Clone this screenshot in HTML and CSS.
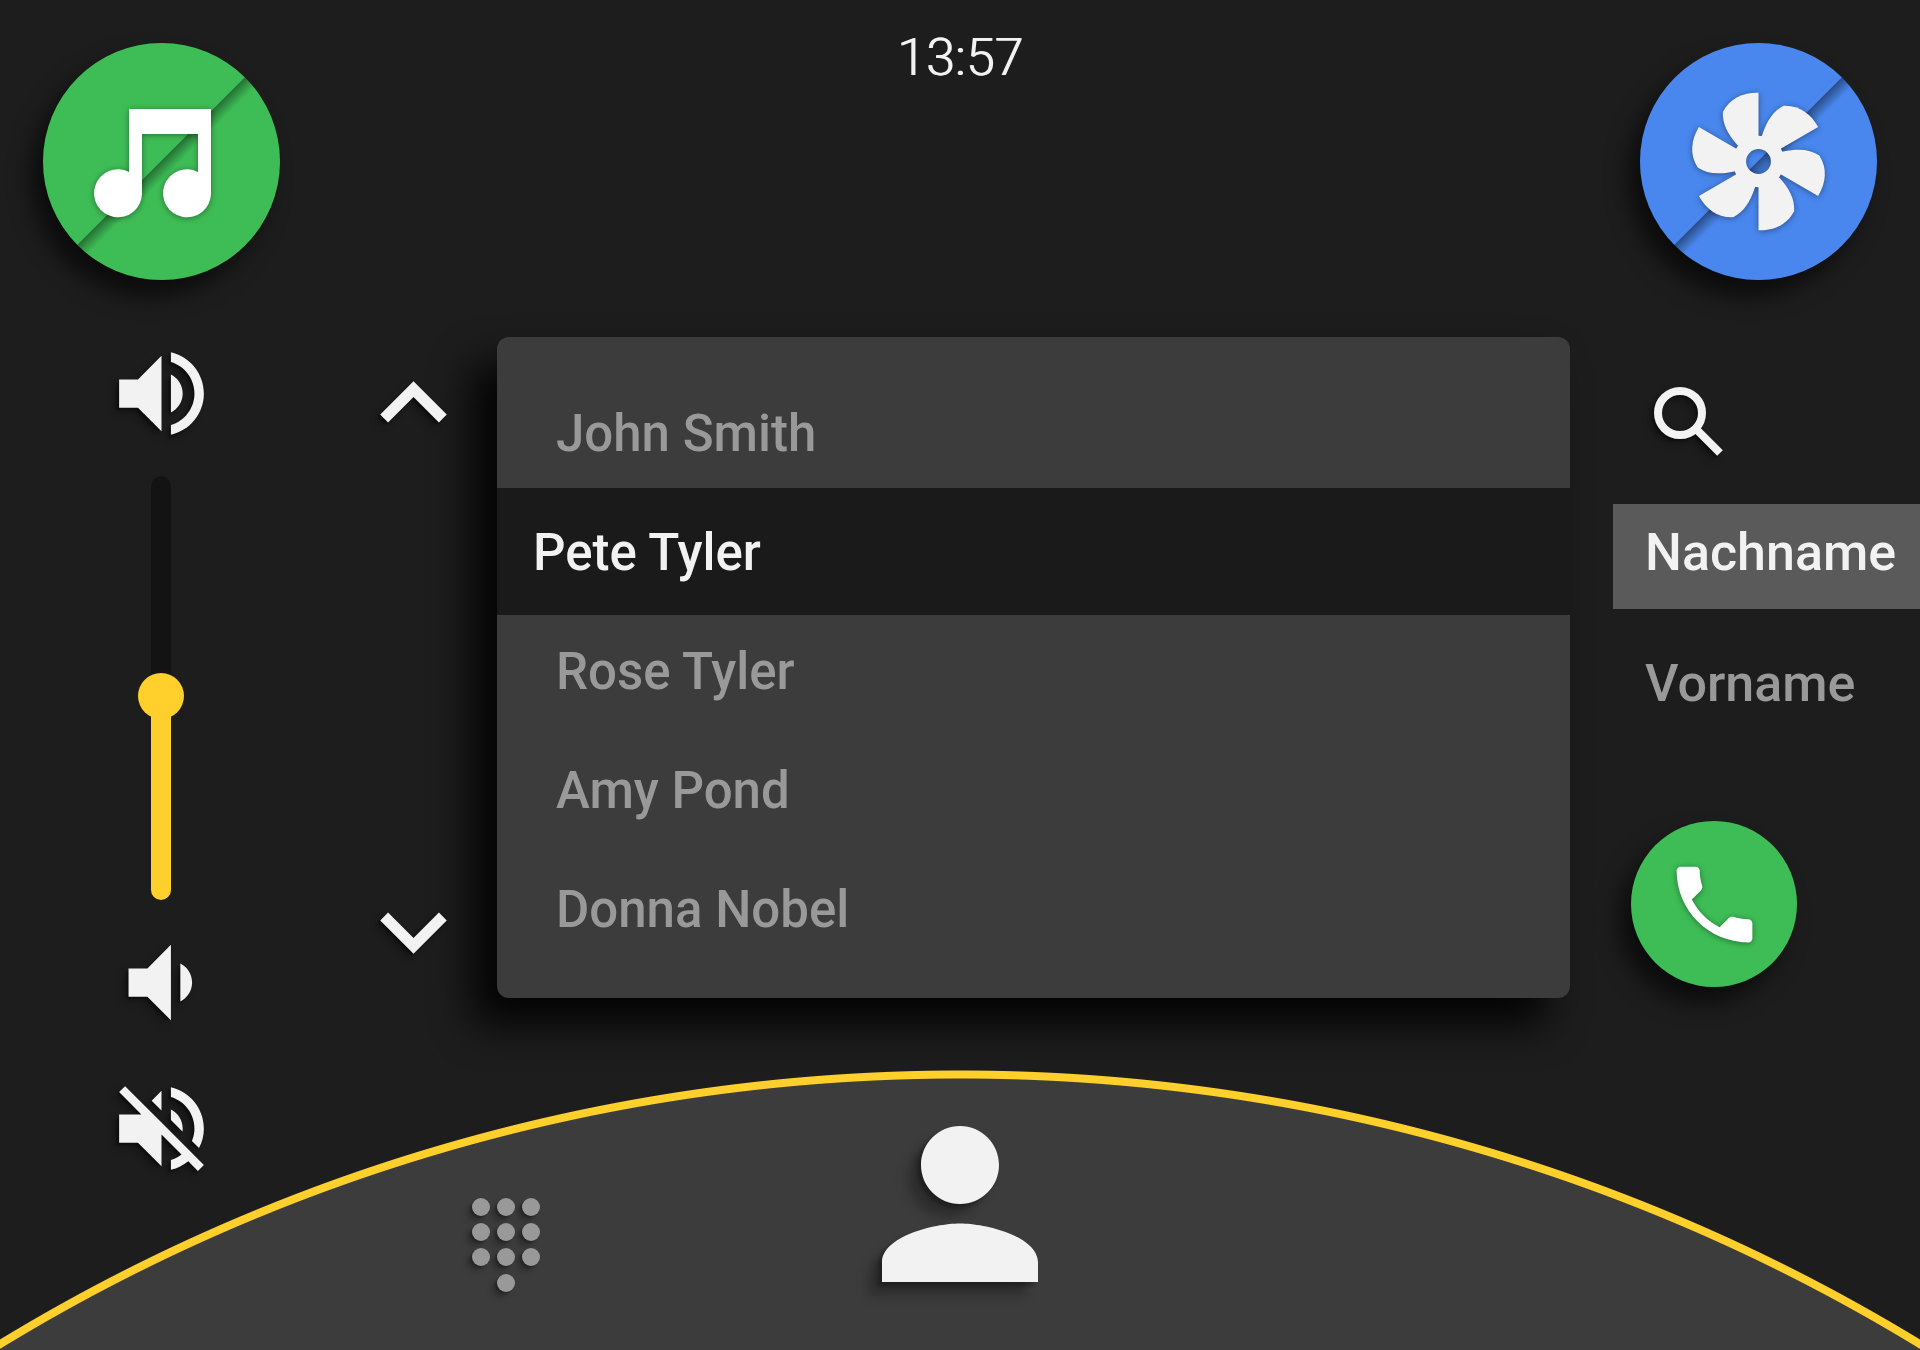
FILE: index.html
```html
<!DOCTYPE html>
<html lang="de">

<head>
  <meta charset="UTF-8">
  <meta name="viewport" content="width=device-width, initial-scale=1.0">
  <title>Telefon</title>
  <link rel="stylesheet" href="styles.css">
</head>

<body>
  <div class="screen">
    <header class="topbar">
      <button class="round music" aria-label="Musik">
        <svg viewBox="0 0 118 109" width="118" height="109">
          <path d="M36 0H118V85A24 24 0 1 1 105 63V25H49V85A24 24 0 1 1 36 63Z" />
        </svg>
      </button>
      <time class="clock">13:57</time>
      <button class="round climate" aria-label="Klima">
        <svg viewBox="-210 -210 420 420" width="141" height="141">
          <defs>
            <path id="blade" d="M0-60V-205C-45-206-85-189-106-148C-108-115-95-85-62-48L-30-40Z" />
          </defs>
          <circle class="hub" r="57" />
          <use href="#blade" />
          <use href="#blade" transform="rotate(60)" />
          <use href="#blade" transform="rotate(120)" />
          <use href="#blade" transform="rotate(180)" />
          <use href="#blade" transform="rotate(240)" />
          <use href="#blade" transform="rotate(300)" />
        </svg>
      </button>
    </header>

    <main class="content">
      <section class="volume">
        <button class="icon" aria-label="Lauter">
          <svg viewBox="0 0 24 24" width="113" height="113">
            <path d="M3 9v6h4l5 5V4L7 9H3zm13.500 3c0-1.770-1.020-3.290-2.500-4.030v8.050c1.480-.73 2.500-2.250 2.500-4.020zM14 3.230v2.060c2.890.86 5 3.540 5 6.710s-2.110 5.850-5 6.710v2.060c4.010-.91 7-4.490 7-8.770s-2.990-7.860-7-8.770z" />
          </svg>
        </button>
        <input class="slider" type="range" min="0" max="100" value="48" aria-label="Lautstärke">
        <button class="icon" aria-label="Leiser">
          <svg viewBox="0 0 24 24" width="113" height="113">
            <path d="M18.500 12c0-1.770-1.020-3.290-2.500-4.030v8.050c1.480-.73 2.500-2.250 2.500-4.020zM5 9v6h4l5 5V4L9 9H5z" />
          </svg>
        </button>
        <button class="icon mute" aria-label="Stumm">
          <svg viewBox="0 0 24 24" width="113" height="113">
            <path d="M16.500 12c0-1.770-1.020-3.290-2.500-4.030v2.210l2.450 2.450c.03-.2.05-.41.05-.63zm2.500 0c0 .94-.2 1.820-.54 2.640l1.510 1.510C20.630 14.910 21 13.500 21 12c0-4.280-2.990-7.860-7-8.770v2.060c2.890.86 5 3.540 5 6.710zM4.270 3L3 4.270 7.730 9H3v6h4l5 5v-6.730l4.250 4.250c-.67.52-1.420.93-2.250 1.180v2.060c1.380-.31 2.630-.95 3.690-1.810L19.730 21 21 19.730l-9-9L4.270 3zM12 4L9.910 6.090 12 8.180V4z" />
          </svg>
        </button>
      </section>

      <nav class="scroll">
        <button class="icon" aria-label="Nach oben">
          <svg viewBox="0 0 24 24" width="133" height="133">
            <path d="M7.410 15.410L12 10.830l4.590 4.580L18 14l-6-6-6 6z" />
          </svg>
        </button>
        <button class="icon" aria-label="Nach unten">
          <svg viewBox="0 0 24 24" width="133" height="133">
            <path d="M7.410 8.590L12 13.170l4.590-4.580L18 10l-6 6-6-6z" />
          </svg>
        </button>
      </nav>

      <ul class="contacts">
        <li><button class="contact">John Smith</button></li>
        <li><button class="contact selected">Pete Tyler</button></li>
        <li><button class="contact">Rose Tyler</button></li>
        <li><button class="contact">Amy Pond</button></li>
        <li><button class="contact">Donna Nobel</button></li>
      </ul>

      <aside class="filter">
        <button class="icon search" aria-label="Suchen">
          <svg viewBox="0 0 69 69" width="69" height="69">
            <circle cx="26" cy="26" r="22" />
            <path d="M41 41L66 66" />
          </svg>
        </button>
        <button class="sort selected">Nachname</button>
        <button class="sort">Vorname</button>
        <button class="round call" aria-label="Anrufen">
          <svg viewBox="0 0 24 24" width="101" height="101">
            <path d="M6.620 10.790c1.440 2.830 3.760 5.140 6.590 6.590l2.200-2.200c.27-.27.67-.36 1.020-.24 1.120.37 2.330.57 3.570.57.55 0 1 .45 1 1V20c0 .55-.45 1-1 1-9.390 0-17-7.610-17-17 0-.55.45-1 1-1h3.500c.55 0 1 .45 1 1 0 1.250.2 2.450.57 3.570.11.35.03.74-.25 1.020l-2.200 2.200z" />
          </svg>
        </button>
      </aside>

      <nav class="dock">
        <button class="icon dialpad" aria-label="Wähltastatur">
          <svg viewBox="0 0 68 94" width="68" height="94">
            <circle cx="9" cy="9" r="9" />
            <circle cx="34" cy="9" r="9" />
            <circle cx="59" cy="9" r="9" />
            <circle cx="9" cy="34" r="9" />
            <circle cx="34" cy="34" r="9" />
            <circle cx="59" cy="34" r="9" />
            <circle cx="9" cy="59" r="9" />
            <circle cx="34" cy="59" r="9" />
            <circle cx="59" cy="59" r="9" />
            <circle cx="34" cy="85" r="9" />
          </svg>
        </button>
        <button class="icon person" aria-label="Kontakte">
          <svg viewBox="0 0 24 24" width="234" height="234">
            <path d="M12 12c2.210 0 4-1.790 4-4s-1.790-4-4-4-4 1.790-4 4 1.790 4 4 4zm0 2c-2.670 0-8 1.340-8 4v2h16v-2c0-2.660-5.330-4-8-4z" />
          </svg>
        </button>
      </nav>
    </main>
  </div>
</body>

</html>
```

FILE: styles.css
```css
* {
  box-sizing: border-box;
}

body {
  margin: 0;
  background-color: #1d1d1d;
  color: #f2f2f2;
  font-family: Roboto, sans-serif;
}

button {
  padding: 0;
  border: none;
  background: none;
  color: inherit;
  font: inherit;
  cursor: pointer;
}

svg {
  display: block;
  overflow: visible;
  fill: #f2f2f2;
}

/* the dock is the top of a very large circle below the screen */
.screen {
  display: flex;
  flex-direction: column;
  min-height: 100vh;
  overflow: hidden;
  background: radial-gradient(circle at 50% calc(100% + 1568px), #3c3c3c 1839px, #ffcf2b 1840px, #ffcf2b 1847px, #1d1d1d 1848px);
}

.topbar {
  display: flex;
  justify-content: space-between;
  align-items: flex-start;
  padding: 28px 43px 57px;
}

.clock {
  padding-left: 2px;
  font-size: 52px;
  font-weight: 300;
  line-height: 60px;
  text-shadow: -1px 0 0 #f2f2f2;
}

.round {
  display: flex;
  justify-content: center;
  align-items: center;
  width: 237px;
  height: 237px;
  border-radius: 50%;
  box-shadow: -12px 16px 22px rgba(0, 0, 0, 0.6);
}

.round svg {
  filter: drop-shadow(0 1px 3px rgba(0, 0, 0, 0.4));
}

.music,
.climate {
  margin-top: 15px;
}

.music {
  padding: 4px 19px 0 0;
  background: linear-gradient(135deg, #3ebd56 49.7%, #267335 50%, #3ebd56 54%);
}

.music svg,
.call svg {
  fill: #fff;
}

.climate {
  background: linear-gradient(135deg, #4987ee 49.7%, #2b4f8c 50%, #4987ee 54%);
}

.hub {
  fill: none;
  stroke: #f2f2f2;
  stroke-width: 40;
}

.content {
  flex: 1;
  display: grid;
  grid-template-columns: 322px 175px 1fr 350px;
  grid-template-rows: auto 1fr;
}

.icon svg {
  filter: drop-shadow(-2px 2px 1px rgba(0, 0, 0, 0.4)) drop-shadow(-4px 4px 3px rgba(0, 0, 0, 0.3));
}

.volume {
  grid-column: 1;
  grid-row: 1 / 3;
  z-index: 1;
  display: flex;
  flex-direction: column;
  align-items: center;
  gap: 26px;
}

.mute {
  margin-top: 7px;
}

.slider {
  appearance: none;
  writing-mode: vertical-lr;
  direction: rtl;
  width: 46px;
  height: 424px;
  margin: 0;
  background: none;
}

.slider::-webkit-slider-runnable-track {
  width: 20px;
  border-radius: 10px;
  background: linear-gradient(to top, #ffcf2b 48%, #131313 48%);
}

.slider::-webkit-slider-thumb {
  appearance: none;
  width: 46px;
  height: 46px;
  margin-right: -13px;
  margin-left: -13px;
  border-radius: 50%;
  background-color: #ffcf2b;
}

.scroll {
  z-index: 1;
  display: flex;
  flex-direction: column;
  justify-content: space-between;
  align-items: flex-end;
  padding-right: 17px;
}

.contacts {
  margin: 0;
  padding: 36px 0 30px;
  list-style: none;
  border-radius: 12px;
  background-color: #3c3c3c;
  box-shadow: -24px 26px 40px rgba(0, 0, 0, 0.9);
}

.contacts li {
  display: flex;
  align-items: center;
  height: 119px;
}

.contact {
  flex: none;
  width: 100%;
  height: 119px;
  padding: 2px 0 0 59px;
  color: #999;
  font-size: 51px;
  font-weight: 500;
  text-align: left;
}

.contact.selected {
  height: 127px;
  padding-left: 36px;
  background-color: #1a1a1a;
  color: #f2f2f2;
}

.filter {
  display: flex;
  flex-direction: column;
  padding-left: 43px;
}

.search {
  align-self: flex-start;
  margin: 50px 0 48px 41px;
}

.search svg {
  fill: none;
  stroke: #f2f2f2;
  stroke-width: 8;
}

.sort {
  height: 105px;
  margin-bottom: 26px;
  padding: 0 0 8px 32px;
  color: #999;
  font-size: 52px;
  font-weight: 500;
  text-align: left;
}

.sort.selected {
  background-color: #5a5a5a;
  color: #f2f2f2;
}

.call {
  width: 166px;
  height: 166px;
  margin: 55px 0 0 18px;
  background-color: #3ebd56;
}

.dock {
  grid-column: 1 / -1;
  grid-row: 2;
  display: grid;
  grid-template-columns: repeat(3, 454px);
  justify-content: center;
  justify-items: center;
  align-items: end;
  padding-bottom: 29px;
}

.dialpad {
  padding: 29px;
}

.dialpad svg {
  fill: #999;
  filter: drop-shadow(-2px 2px 1px rgba(0, 0, 0, 0.25)) drop-shadow(-5px 5px 2px rgba(0, 0, 0, 0.2));
}

.person svg {
  filter: drop-shadow(-4px 4px 2px rgba(0, 0, 0, 0.3)) drop-shadow(-12px 12px 5px rgba(0, 0, 0, 0.25));
}
```
